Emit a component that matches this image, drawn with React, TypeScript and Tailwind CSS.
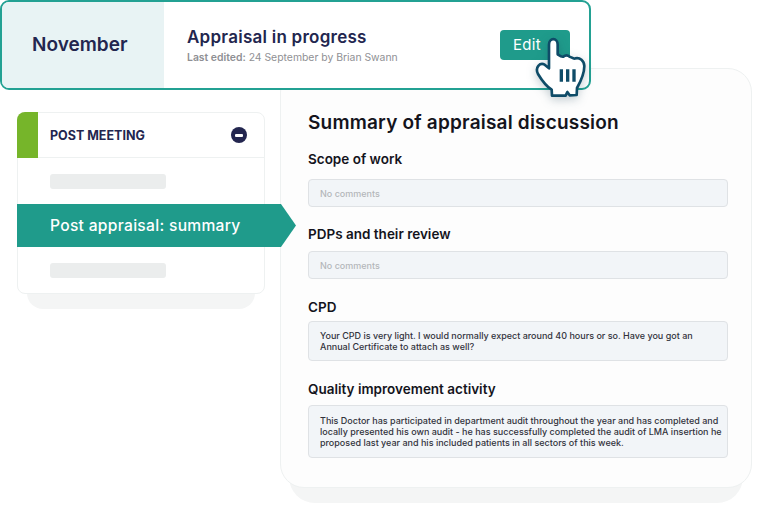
const font = { fontFamily: 'Inter, "Open Sans", sans-serif' };

const Placeholder = () => <div className="w-[116px] h-[15px] rounded-[3px] bg-[#ebeded]" />;

const Section = ({ title, text, muted, tall, className }: { title: string; text: string; muted?: boolean; tall?: boolean; className: string }) => (
  <div className={className}>
    <h3 className="text-[13.5px] leading-[18px] font-semibold text-[#14141c]">{title}</h3>
    <div
      className={`rounded-[4px] border border-[#dfe2e5] bg-[#f2f5f8] pl-[11px] pr-1 text-[9px] leading-[11px] font-medium ${
        muted ? 'h-[28px] flex items-center text-[#b4b7ba]' : tall ? 'py-[9px] text-[#33333c]' : 'py-[8px] text-[#33333c]'
      }`}
    >
      {text}
    </div>
  </div>
);

const Hand = () => (
  <svg viewBox="0 0 180 216" className="absolute left-[530px] top-[30px] w-[60px] h-[72px] drop-shadow-[0_3px_5px_rgba(20,60,80,0.25)]">
    <path
      d="M57 44 C57 22 83 22 83 44 L83 73 C90 78 95 82 100 80 C108 74 114 76 119 80 C126 82 130 88 136 85 C150 82 162 92 163 108 C163 125 160 140 141 174 L140 195 L119 196 L112 186 L107 197 L66 197 L65 179 C50 170 38 155 24 132 C14 112 30 97 44 104 L57 115 Z"
      fill="#fff"
      stroke="#0f4c68"
      strokeWidth="8"
      strokeLinejoin="round"
    />
    <path d="M94 118V155M113 118V155M132 118V155" stroke="#0f4c68" strokeWidth="10" fill="none" />
  </svg>
);

export default function App() {
  return (
    <div className="w-[768px] h-[521px] bg-white overflow-hidden" style={font}>
      <div className="relative z-10">
        <div className="w-[591px] h-[90px] flex rounded-[9px] border-2 border-[#23a193] bg-white overflow-hidden">
          <div className="w-[162px] bg-[#e8f3f4] flex items-center pl-[30px] text-[#23264f] text-[19px] font-semibold">
            November
          </div>
          <div className="flex-1 pl-[23px] pt-[23px]">
            <div className="text-[#23264f] text-[17px] tracking-[0.25px] leading-[24px] font-semibold">Appraisal in progress</div>
            <div className="text-[#8f9094] text-[10.4px] leading-[14px] mt-[2px]">
              <span className="font-semibold">Last edited:</span> 24 September by Brian Swann
            </div>
          </div>
          <div className="mr-[19px] mt-[28px] w-[70px] h-[30px] rounded-[4px] bg-[#1f9b8b] text-white text-[15px] tracking-[0.3px] flex items-center pl-[13px]">
            Edit
          </div>
        </div>
        <Hand />
      </div>

      <div className="flex isolate -mt-[22px]">
        <div className="relative ml-[17px] mt-[44px] w-[248px] h-[182px] rounded-[8px] border border-[#eef1f1] bg-white before:absolute before:left-[9px] before:right-[9px] before:-bottom-[16px] before:h-[40px] before:rounded-[16px] before:bg-[#f4f5f5] before:-z-10">
          <div className="h-[45px] flex items-center border-b border-[#eef1f1]">
            <div className="w-[21px] h-[46px] -ml-px -mt-px self-start bg-[#76b52a] rounded-tl-[8px]" />
            <div className="ml-[12px] mt-[2px] text-[12.5px] font-bold text-[#23264f]">POST MEETING</div>
            <div className="ml-auto mr-[17px] w-4 h-4 rounded-full bg-[#23264f] flex items-center justify-center">
              <div className="w-2 h-[3px] bg-white rounded-[1px]" />
            </div>
          </div>
          <div className="pl-[32px] pt-[16px]"><Placeholder /></div>
          <div
            className="relative z-10 mt-[15px] -ml-px w-[279px] h-[43px] pt-px bg-[#1f9b8b] text-white text-[15.6px] tracking-[0.3px] font-medium flex items-center pl-[33px]"
            style={{ clipPath: 'polygon(0 0, 264px 0, 100% 50%, 264px 100%, 0 100%)' }}
          >
            Post appraisal: summary
          </div>
          <div className="pl-[32px] pt-[16px]"><Placeholder /></div>
        </div>

        <div className="relative ml-[15px] w-[472px] h-[420px] rounded-[24px] border border-[#eef1f1] bg-[#fdfdfd] pl-[27px] pr-[23px] before:absolute before:left-[8px] before:right-[8px] before:-bottom-[16px] before:h-[60px] before:rounded-[26px] before:bg-[#f4f5f5] before:-z-10">
          <h2 className="mt-[42px] text-[19px] tracking-[0.2px] leading-[24px] font-semibold text-[#14141c]">Summary of appraisal discussion</h2>
          <Section className="mt-[15px] space-y-[11px]" title="Scope of work" text="No comments" muted />
          <Section className="mt-[18px] space-y-[8px]" title="PDPs and their review" text="No comments" muted />
          <Section className="mt-[19px] space-y-[5px]" title="CPD" text="Your CPD is very light. I would normally expect around 40 hours or so. Have you got an Annual Certificate to attach as well?" />
          <Section className="mt-[19px] space-y-[7px]" tall title="Quality improvement activity" text="This Doctor has participated in department audit throughout the year and has completed and locally presented his own audit - he has successfully completed the audit of LMA insertion he proposed last year and his included patients in all sectors of this week." />
        </div>
      </div>
    </div>
  );
}
